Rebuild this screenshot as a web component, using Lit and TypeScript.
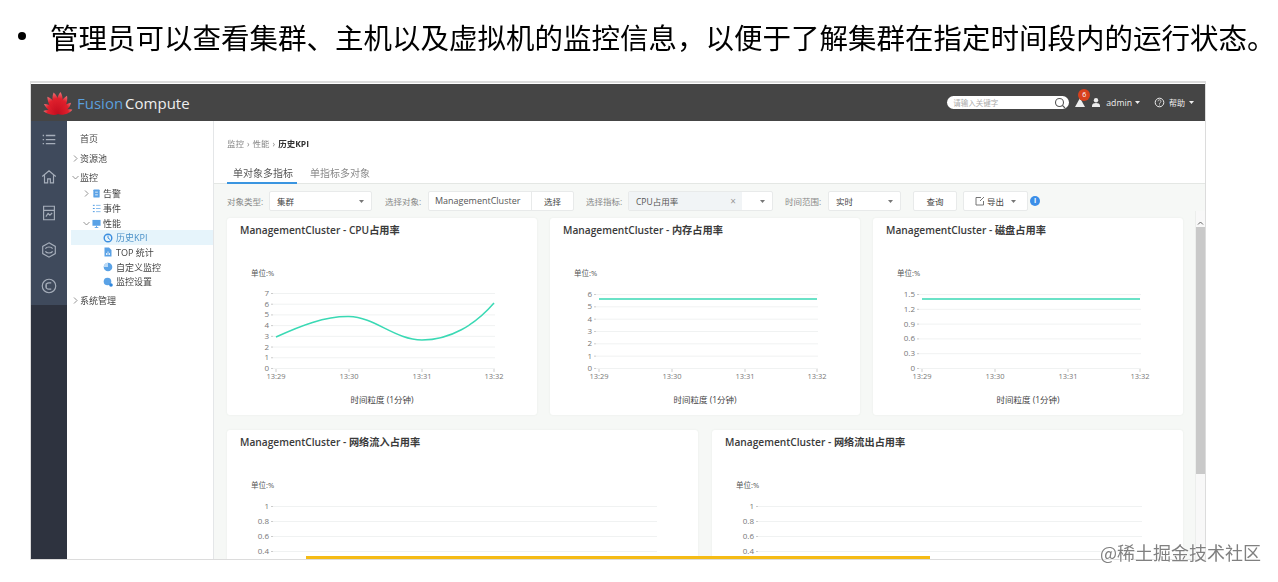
import { LitElement, html, svg, css } from 'lit';
import { customElement, property } from 'lit/decorators.js';

const FONT = css`"Open Sans", "Noto Sans CJK SC", sans-serif`;

interface Tick {
  label: string;
  y: number;
}

const ticks = (labels: string[], top: number, step: number): Tick[] =>
  labels.map((label, i) => ({ label, y: top + step * i }));

const CPU_CURVE = 'M49 119C73 108 98 98 122 98.5C148 99 168 122 195 122C223 122 248 107 267 85';

@customElement('kpi-card')
export class KpiCard extends LitElement {
  @property() heading = '';
  @property({ type: Number }) width = 310;
  @property({ type: Number }) gridEnd = 268;
  @property({ attribute: false }) yTicks: Tick[] = [];
  @property({ attribute: false }) xTicks: number[] = [];
  @property() line = '';

  static styles = css`
    :host {
      display: block;
      height: 197px;
      background: #fff;
      border-radius: 3px;
      box-shadow: 0 0 2px #e6e9e6;
      font-family: ${FONT};
    }
    h3 {
      margin: 0;
      padding: 6px 0 0 13px;
      height: 18px;
      font-size: 10.2px;
      line-height: 13px;
      font-weight: 600;
      color: #3a3a3a;
    }
    svg {
      display: block;
    }
    text {
      font-family: ${FONT};
    }
    .unit {
      font-size: 7.5px;
      fill: #555;
    }
    .tick {
      font-size: 7.5px;
      fill: #777;
    }
    .ytick {
      font-size: 8px;
      fill: #777;
    }
    .axis-title {
      font-size: 8.5px;
      fill: #444;
    }
    .grid {
      stroke: #f0f2f2;
      stroke-width: 1;
    }
    .mark {
      stroke: #ccc;
      stroke-width: 1;
    }
    .curve {
      fill: none;
      stroke: #3ad9b4;
      stroke-width: 1.5;
    }
  `;

  render() {
    const times = ['13:29', '13:30', '13:31', '13:32'];
    return html`
      <h3>${this.heading}</h3>
      <svg width=${this.width} height="173" viewBox="0 24 ${this.width} 173">
        <text class="unit" x="24" y="58">单位:%</text>
        ${this.yTicks.map(
          (t) => svg`
            <text class="ytick" x="42" y=${t.y + 3} text-anchor="end">${t.label}</text>
            <line class="mark" x1="44" x2="46" y1=${t.y + 0.5} y2=${t.y + 0.5}></line>
            <line class="grid" x1="46" x2=${this.gridEnd} y1=${t.y + 0.5} y2=${t.y + 0.5}></line>
          `,
        )}
        ${this.xTicks.map(
          (x, i) => svg`
            <line class="mark" x1=${x} x2=${x} y1="151" y2="154"></line>
            <text class="tick" x=${x} y="161" text-anchor="middle">${times[i]}</text>
          `,
        )}
        ${this.xTicks.length
          ? svg`<text class="axis-title" x="155" y="185" text-anchor="middle">时间粒度 (1分钟)</text>`
          : ''}
        ${this.line ? svg`<path class="curve" d=${this.line}></path>` : ''}
      </svg>
    `;
  }
}

const caret = html`<svg class="caret" width="5" height="3" viewBox="0 0 5 3"><path d="M0 0h5L2.500 3z" fill="currentColor"></path></svg>`;

const chevron = (open: boolean) => html`<svg class="chev" width="7" height="7" viewBox="0 0 7 7"><path d=${open ? 'M.5 2l3 3 3-3' : 'M2 .5l3 3-3 3'} fill="none" stroke="#888" stroke-width=".9"></path></svg>`;

const navIcons = [
  svg`<path d="M3 5h1.500M3 9.500h1.500M3 14h1.500M6.500 5H17M6.500 9.500H17M6.500 14H17" stroke-width="1.500"></path>`,
  svg`<path d="M2.500 9.500L10 3l7.500 6.500M5 8v8.500h3.500v-4.500h3v4.500H15V8"></path>`,
  svg`<path d="M4 2.500h12v15H4zM4 7h12M6.500 14l2.500-3.500 2 2 2.500-2.500"></path>`,
  svg`<path d="M10 2l7 4v8l-7 4-7-4V6zM6 8.500C7.500 6 12.500 6 14 8.500M14 11.500C12.500 14 7.500 14 6 11.500"></path>`,
  svg`<circle cx="10" cy="10" r="7.500"></circle><path d="M12.500 6.500h-2.500a3.500 3.500 0 0 0 0 7h2.500M7 7v6"></path>`,
];

const treeIcons: Record<string, unknown> = {
  alarm: svg`<rect x="1.500" y=".5" width="7" height="9" rx="1" fill="#5aa2e6"></rect><path d="M3.500 3.500h3M3.500 6.500h3" stroke="#fff" stroke-width=".9"></path>`,
  event: svg`<path d="M1 1.500h2M1 5h2M1 8.500h2" stroke="#3b8ee0" stroke-width="1"></path><path d="M4.500 1.500h5M4.500 5h5M4.500 8.500h5" stroke="#7fb6ea" stroke-width="1"></path>`,
  perf: svg`<rect x=".5" y="1" width="9" height="6.500" fill="#5aa2e6"></rect><path d="M3 9.500h4M5 7.500v2" stroke="#5aa2e6" stroke-width="1"></path>`,
  kpi: svg`<circle cx="5" cy="5" r="3.800" fill="none" stroke="#3b8ee0" stroke-width="1.400"></circle><path d="M5 2.500V5l2 1.500" fill="none" stroke="#3b8ee0" stroke-width="1"></path>`,
  top: svg`<path d="M1.500.5h4.500l2.500 2.500v6.500h-7z" fill="#5aa2e6"></path><path d="M3.500 8V6M5 8V4.500M6.500 8V6" stroke="#fff" stroke-width=".8"></path>`,
  custom: svg`<circle cx="5" cy="5" r="4.300" fill="#5aa2e6"></circle><path d="M5 5V.7A4.300 4.300 0 0 0 .7 5z" fill="#bcdaf5"></path>`,
  setting: svg`<circle cx="4.500" cy="4.500" r="3.800" fill="#5aa2e6"></circle><circle cx="8" cy="8" r="1.800" fill="#2f86dc"></circle>`,
};

const treeIcon = (name: string) => html`<svg class="ticon" width="10" height="10" viewBox="0 0 10 10">${treeIcons[name]}</svg>`;

// fan of the logo: angle and length of each petal
const petals: [number, number][] = [
  [-76, 0.68],
  [-52, 0.78],
  [-29, 0.92],
  [-9, 1],
  [9, 1],
  [29, 0.92],
  [52, 0.78],
  [76, 0.68],
];

@customElement('app-root')
export class AppRoot extends LitElement {
  static styles = css`
    :host {
      display: block;
      width: 1278px;
      height: 582px;
      background: #fff;
      overflow: hidden;
      position: relative;
      font-family: ${FONT};
    }
    .intro {
      display: flex;
      align-items: center;
      height: 72px;
      margin: 0;
      padding-left: 18px;
      font-size: 28.5px;
      color: #000;
      font-family: "Noto Sans CJK SC", sans-serif;
      font-weight: 400;
      white-space: nowrap;
      filter: blur(0.3px);
    }
    .intro::before {
      content: '';
      flex: none;
      width: 8px;
      height: 8px;
      margin-right: 24px;
      border-radius: 50%;
      background: #000;
    }
    .frame {
      margin: 9px 0 0 30px;
      width: 1176px;
      height: 479px;
      box-sizing: border-box;
      border: 1px solid #dcdcdc;
      border-width: 2px 1px 1px 1px;
      padding-top: 1px;
      display: flex;
      flex-direction: column;
      overflow: hidden;
      filter: blur(0.45px);
    }
    header {
      flex: none;
      height: 37px;
      background: #454545;
      display: flex;
      align-items: center;
      color: #eee;
      font-size: 9px;
    }
    .logo {
      margin-left: 12px;
      flex: none;
    }
    .brand {
      margin-left: 4px;
      font-size: 15px;
      font-family: "Open Sans", sans-serif;
      color: #eee;
    }
    .brand span {
      color: #5b9fdc;
      margin-right: 2px;
    }
    .search {
      margin-left: auto;
      width: 122px;
      height: 13px;
      border-radius: 7px;
      background: #fff;
      display: flex;
      align-items: center;
      justify-content: space-between;
      padding: 0 3px 0 6px;
      box-sizing: border-box;
      color: #aaa;
      font-size: 7.5px;
    }
    .alarm {
      position: relative;
      margin-left: 6px;
      display: flex;
    }
    .badge {
      position: absolute;
      left: 3px;
      top: -9px;
      width: 12px;
      height: 12px;
      border-radius: 50%;
      background: #d8401c;
      color: #fff;
      font-size: 7px;
      line-height: 12px;
      text-align: center;
    }
    .user {
      margin-left: 7px;
      display: flex;
    }
    .name {
      margin-left: 6px;
      font-size: 8.7px;
    }
    .caret {
      margin-left: 3px;
      flex: none;
    }
    .help {
      margin-left: 14px;
      display: flex;
    }
    .help-label {
      margin-left: 4px;
      font-size: 8px;
    }
    .help-wrap {
      margin-right: 11px;
      display: flex;
      align-items: center;
    }
    .help-wrap .caret {
      margin-left: 4px;
    }
    .body {
      flex: 1;
      min-height: 0;
      display: flex;
    }
    nav {
      flex: none;
      width: 36px;
      background: linear-gradient(#3f4a5c 0, #3f4a5c 184px, #2e333f 184px);
      display: flex;
      flex-direction: column;
      align-items: center;
      padding-top: 10px;
      box-sizing: border-box;
      gap: 18.500px;
    }
    nav svg {
      fill: none;
      stroke: #a6aeba;
      stroke-width: 1.300;
    }
    .tree {
      flex: none;
      width: 147px;
      box-sizing: border-box;
      padding: 8px 0 0 4px;
      border-right: 1px solid #e4e6e8;
      font-size: 9px;
      color: #444;
    }
    .row {
      display: flex;
      align-items: center;
      white-space: nowrap;
    }
    .l0 {
      height: 19.600px;
      padding-left: 9px;
    }
    .l0 .chev {
      margin-left: -8px;
      margin-right: 1px;
    }
    .parent {
      margin-bottom: -1.500px;
    }
    .last {
      margin-top: 1.500px;
    }
    .l1,
    .l2 {
      height: 14.700px;
    }
    .l1 {
      padding-left: 21px;
    }
    .l1 .chev {
      margin-left: -9px;
      margin-right: 2px;
    }
    .l1 .ticon {
      width: 9px;
      height: 9px;
      margin-right: 2px;
    }
    .l2 {
      padding-left: 32px;
    }
    .ticon {
      margin-right: 3px;
      flex: none;
    }
    .active {
      background: #e6f4fb;
      color: #4a90c8;
    }
    main {
      flex: 1;
      min-width: 0;
      display: flex;
      flex-direction: column;
    }
    .crumbs {
      height: 46px;
      box-sizing: border-box;
      padding: 17px 0 0 13px;
      display: flex;
      gap: 3px;
      font-size: 8.500px;
      line-height: 12px;
      color: #888;
    }
    .crumbs b {
      color: #333;
      font-weight: 700;
    }
    .tabs {
      height: 17px;
      box-sizing: border-box;
      display: flex;
      padding-left: 13px;
      border-bottom: 1px solid #e4e7e4;
      font-size: 10px;
      line-height: 13px;
      color: #888;
    }
    .tab {
      flex: none;
      width: 70px;
      box-sizing: border-box;
      height: 17px;
      padding-left: 6px;
      margin-right: 7px;
    }
    .tab.on {
      color: #555;
      border-bottom: 2px solid #3a95e0;
    }
    .content {
      flex: 1;
      min-height: 0;
      background: #f6f8f6;
      display: flex;
      flex-direction: column;
      position: relative;
    }
    .toolbar {
      flex: none;
      height: 27px;
      box-sizing: border-box;
      padding: 7px 0 0 13px;
      display: flex;
      align-items: center;
      font-size: 8.500px;
      color: #888;
    }
    .lbl {
      width: 36px;
      margin-right: 6px;
      white-space: nowrap;
    }
    .ctl {
      height: 20px;
      box-sizing: border-box;
      background: #fff;
      border: 1px solid #e8eaea;
      border-radius: 2px;
      display: flex;
      align-items: center;
      color: #444;
      margin-right: 13px;
    }
    .select {
      justify-content: space-between;
      padding: 0 7px 0 7px;
      color: #777;
    }
    .select span {
      color: #444;
    }
    .type {
      width: 103px;
    }
    .group {
      width: 146px;
      margin: 0 12px 0 1px;
    }
    .group > span:first-child {
      width: 103px;
      padding-left: 6px;
      box-sizing: border-box;
      border-right: 1px solid #e8eaea;
      line-height: 18px;
      font-size: 9px;
      color: #555;
    }
    .group > span:last-child {
      flex: 1;
      text-align: center;
    }
    .tag {
      width: 113px;
      height: 18px;
      background: #f1f4f6;
      display: flex;
      align-items: center;
      justify-content: space-between;
      padding: 0 6px 0 7px;
      box-sizing: border-box;
      color: #555;
    }
    .tag i {
      font-style: normal;
      color: #999;
      font-size: 10px;
    }
    .multi {
      width: 145px;
      margin-right: 12px;
      padding-right: 7px;
      justify-content: space-between;
      color: #777;
    }
    .range {
      width: 73px;
      margin: 0 12px 0 1px;
    }
    .btn {
      justify-content: center;
      margin-right: 6px;
    }
    .query {
      width: 44px;
    }
    .export {
      width: 65px;
      justify-content: flex-start;
      padding-left: 11px;
      margin-right: 2px;
    }
    .export svg:first-child {
      margin-right: 2px;
    }
    .export .caret {
      margin-left: 7px;
      color: #777;
    }
    .info {
      width: 10px;
      height: 10px;
      border-radius: 50%;
      background: #3b8ee8;
      color: #fff;
      font-size: 7px;
      line-height: 10px;
      text-align: center;
      font-weight: 700;
    }
    .panes {
      flex: 1;
      min-height: 0;
      display: flex;
      padding-top: 7px;
      overflow: hidden;
    }
    .cards {
      margin-left: 13px;
      width: 956px;
      flex: none;
      display: flex;
      flex-direction: column;
      gap: 15px;
    }
    .cols3 {
      display: grid;
      grid-template-columns: repeat(3, 310px);
      gap: 13px;
    }
    .cols2 {
      display: grid;
      grid-template-columns: repeat(2, 471px);
      gap: 14px;
    }
    .scroll {
      margin-left: auto;
      width: 10px;
      margin-top: -7px;
      padding-top: 9px;
      flex: none;
      display: flex;
      flex-direction: column;
      align-items: center;
      background: #f8f8f8;
      border-left: 1px solid #eceeec;
      box-sizing: border-box;
    }
    .scroll svg {
      margin: 1px 0 2px;
      flex: none;
    }
    .thumb {
      width: 100%;
      height: 247px;
      flex: none;
      background: #c9c9c9;
    }
    .progress {
      position: absolute;
      left: 92px;
      bottom: 0;
      width: 624px;
      height: 3px;
      background: #f5bb15;
    }
    .watermark {
      position: absolute;
      left: 1100px;
      top: 540px;
      font-family: "Noto Sans CJK SC", sans-serif;
      font-size: 18px;
      line-height: 24px;
      color: #808080;
      white-space: nowrap;
      text-shadow: 0 0 2px #fff, 0 0 2px #fff;
    }
  `;

  render() {
    const top = [49, 122, 195, 267];
    const mem = ticks(['6', '5', '4', '3', '2', '1', '0'], 76, 12.33);
    const disk = ticks(['1.5', '1.2', '0.9', '0.6', '0.3', '0'], 76, 14.8);
    const net = ticks(['1', '0.8', '0.6', '0.4'], 76, 15);
    const cpu = ticks(['7', '6', '5', '4', '3', '2', '1', '0'], 75, 10.71);
    return html`
      <p class="intro">管理员可以查看集群、主机以及虚拟机的监控信息，以便于了解集群在指定时间段内的运行状态。</p>
      <div class="frame">
        <header>
          <svg class="logo" width="30" height="24" viewBox="0 0 30 24">
            <defs>
              <linearGradient id="petal" x1="0" y1="1" x2="0" y2="0">
                <stop offset="0" stop-color="#c30d1f"></stop>
                <stop offset="0.7" stop-color="#e0202c"></stop>
                <stop offset="1" stop-color="#f0767a"></stop>
              </linearGradient>
            </defs>
            ${petals.map(
              ([a, s]) => svg`<path transform="translate(15 23) rotate(${a}) scale(${s})" d="M0 0C-4.500-5-4.500-16-1-22C3.500-17 4.500-6 0 0z" fill="url(#petal)"></path>`,
            )}
          </svg>
          <div class="brand"><span>Fusion</span>Compute</div>
          <div class="search">
            请输入关键字
            <svg width="12" height="12" viewBox="0 0 12 12" fill="none" stroke="#555" stroke-width="1.100"><circle cx="5.500" cy="5.500" r="4"></circle><path d="M8.500 8.500l2.500 2.500"></path></svg>
          </div>
          <div class="alarm">
            <svg width="10" height="9" viewBox="0 0 10 9"><path d="M5 0l5 9H0z" fill="#eee"></path></svg>
            <span class="badge">6</span>
          </div>
          <div class="user">
            <svg width="8" height="9" viewBox="0 0 8 9" fill="#eee"><circle cx="4" cy="2.200" r="2.200"></circle><path d="M0 9V7.500C0 5.800 2 5 4 5s4 .8 4 2.500V9z"></path></svg>
          </div>
          <span class="name">admin</span>${caret}
          <div class="help">
            <svg width="11" height="11" viewBox="0 0 11 11" fill="none" stroke="#eee"><circle cx="5.500" cy="5.500" r="4.300"></circle><path d="M4 4.300a1.500 1.500 0 1 1 2.300 1.300c-.6.400-.8.600-.8 1.200M5.500 7.500v1" stroke-width=".8"></path></svg>
          </div>
          <div class="help-wrap"><span class="help-label">帮助</span>${caret}</div>
        </header>
        <div class="body">
          <nav>
            ${navIcons.map((icon) => html`<svg width="18" height="18" viewBox="0 0 20 20">${icon}</svg>`)}
          </nav>
          <div class="tree">
            <div class="row l0">首页</div>
            <div class="row l0">${chevron(false)}资源池</div>
            <div class="row l0 parent">${chevron(true)}监控</div>
            <div class="row l1">${chevron(false)}${treeIcon('alarm')}告警</div>
            <div class="row l1">${treeIcon('event')}事件</div>
            <div class="row l1">${chevron(true)}${treeIcon('perf')}性能</div>
            <div class="row l2 active">${treeIcon('kpi')}历史KPI</div>
            <div class="row l2">${treeIcon('top')}TOP 统计</div>
            <div class="row l2">${treeIcon('custom')}自定义监控</div>
            <div class="row l2">${treeIcon('setting')}监控设置</div>
            <div class="row l0 last">${chevron(false)}系统管理</div>
          </div>
          <main>
            <div class="crumbs"><span>监控</span><span>›</span><span>性能</span><span>›</span><b>历史KPI</b></div>
            <div class="tabs">
              <div class="tab on">单对象多指标</div>
              <div class="tab">单指标多对象</div>
            </div>
            <div class="content">
              <div class="toolbar">
                <span class="lbl">对象类型:</span>
                <div class="ctl select type"><span>集群</span>${caret}</div>
                <span class="lbl">选择对象:</span>
                <div class="ctl group"><span>ManagementCluster</span><span>选择</span></div>
                <span class="lbl">选择指标:</span>
                <div class="ctl multi"><div class="tag">CPU占用率<i>×</i></div>${caret}</div>
                <span class="lbl">时间范围:</span>
                <div class="ctl select range"><span>实时</span>${caret}</div>
                <div class="ctl btn query">查询</div>
                <div class="ctl btn export">
                  <svg width="10" height="10" viewBox="0 0 10 10" fill="none" stroke="#666" stroke-width=".9"><path d="M6 1.500H1v7.500h7.500V5M5 5l4-4"></path></svg>
                  导出${caret}
                </div>
                <div class="info">i</div>
              </div>
              <div class="panes">
                <div class="cards">
                  <div class="cols3">
                    <kpi-card heading="ManagementCluster - CPU占用率" .yTicks=${cpu} .xTicks=${top} line=${CPU_CURVE}></kpi-card>
                    <kpi-card heading="ManagementCluster - 内存占用率" .yTicks=${mem} .xTicks=${top} line="M49 81H267"></kpi-card>
                    <kpi-card heading="ManagementCluster - 磁盘占用率" .yTicks=${disk} .xTicks=${top} line="M49 81H267"></kpi-card>
                  </div>
                  <div class="cols2">
                    <kpi-card heading="ManagementCluster - 网络流入占用率" width="471" gridEnd="430" .yTicks=${net}></kpi-card>
                    <kpi-card heading="ManagementCluster - 网络流出占用率" width="471" gridEnd="430" .yTicks=${net}></kpi-card>
                  </div>
                </div>
                <div class="scroll">
                  <svg width="7" height="4" viewBox="0 0 7 4" fill="none" stroke="#666"><path d="M1 3.500l2.500-2.500 2.500 2.500"></path></svg>
                  <div class="thumb"></div>
                </div>
              </div>
              <div class="progress"></div>
            </div>
          </main>
        </div>
      </div>
      <div class="watermark">@稀土掘金技术社区</div>
    `;
  }
}
